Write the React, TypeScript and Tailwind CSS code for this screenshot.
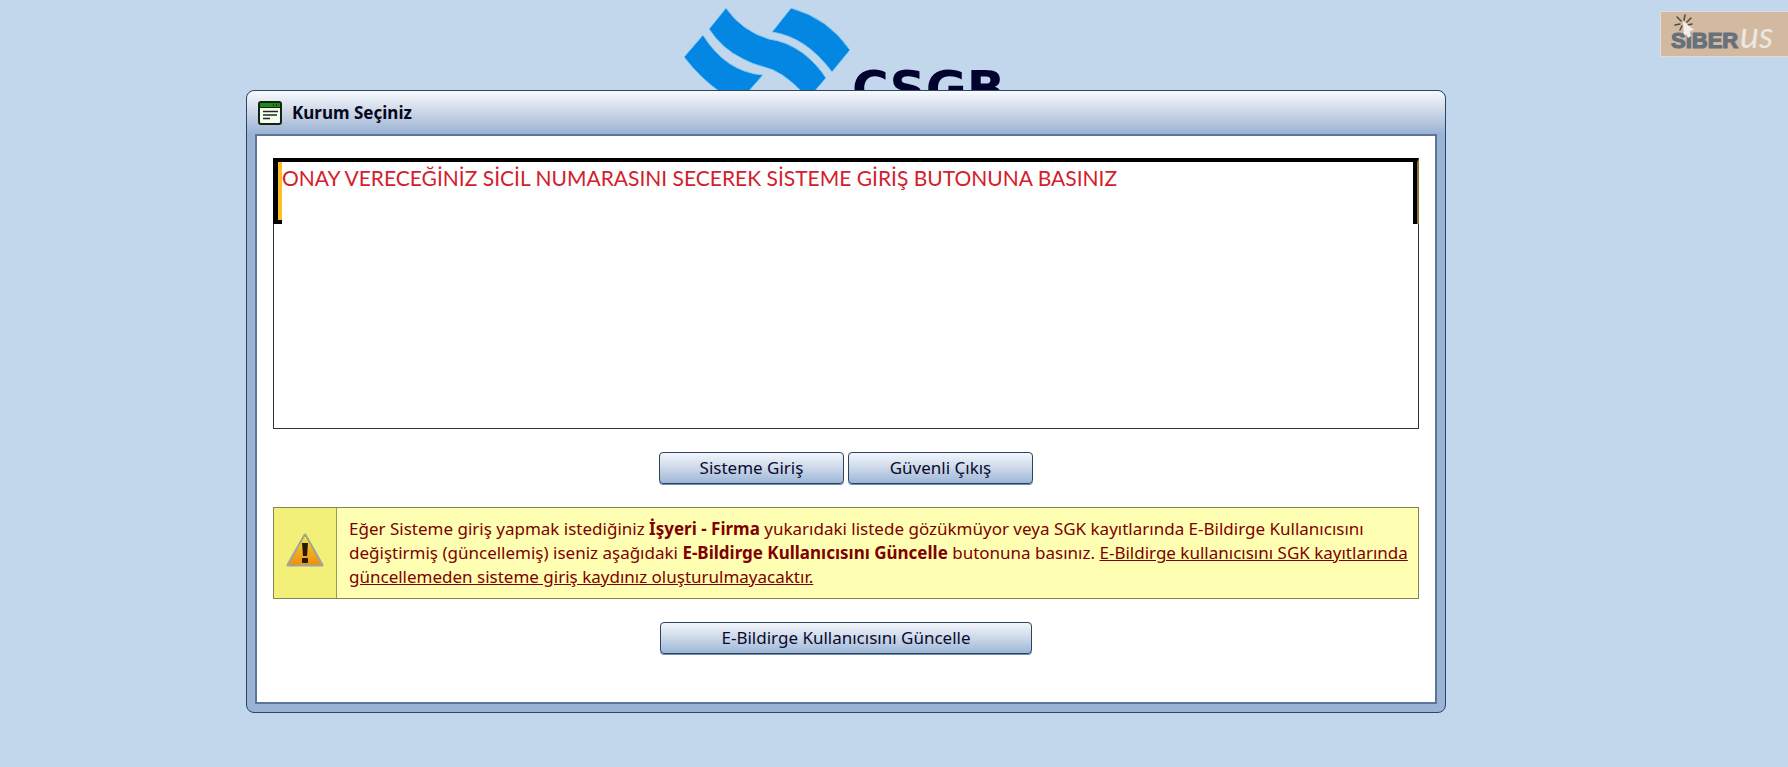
import React from "react";

const CsgbLogo = () => (
  <svg viewBox="0 0 372 90" className="block h-[90px] w-[372px]" role="img" aria-label="CSGB">
    <g fill="#0487e2" stroke="#86cdf6" strokeWidth="1">
      <path d="M66 8 L49 29 Q62 49 83 59 Q92 64 104 67 Q122 71 142 92 L154 92 L166 78 Q158 65 143 53 Q126 41 109 39 Q82 31 66 8 Z" />
      <path d="M43 35 L24 57 Q40 78 60 92 L88 92 L103 75 Q66 72 43 35 Z" />
      <path d="M131 8 L112 32 Q146 37 172 72 L190 50 Q168 18 131 8 Z" />
    </g>
    <text
      x="192"
      y="106"
      fontSize="50"
      fontWeight="700"
      fill="#02022e"
      fontFamily="DejaVu Sans, sans-serif"
    >
      CSGB
    </text>
  </svg>
);

const SiberusLogo = () => (
  <svg viewBox="0 0 128 46" className="block h-[46px] w-32" role="img" aria-label="SIBERus">
    <rect x="0.5" y="0.5" width="130" height="45" fill="#d3b99f" stroke="#dfdcda" />
    <text
      x="11"
      y="37"
      fontSize="22"
      fontWeight="700"
      fill="#66717b"
      stroke="#66717b"
      strokeWidth="1.2"
      fontFamily="Liberation Sans, Arial, sans-serif"
    >
      SIBER
    </text>
    <g stroke="#4d4a48" strokeWidth="1.5" strokeLinecap="round">
      <path d="M17 6 L21 10 M25 4 L24 9 M31 7 L27 11 M15 14 L20 13 M20 19 L22 15 M28 14 L32 13" />
    </g>
    <path d="M23 10 L34 19 L30 20 L31 25 L28 27 L26 23 L24 24 Z" fill="#f1efec" />
    <text
      x="80"
      y="37"
      fontSize="36"
      fontStyle="italic"
      fontWeight="400"
      fill="#ebe8e4"
      fontFamily="Lato, sans-serif"
    >
      us
    </text>
  </svg>
);

const FormIcon = () => (
  <svg viewBox="0 0 24 24" className="h-6 w-6" aria-hidden="true">
    <rect x="1" y="1" width="22" height="22" rx="2" fill="#f6fff2" stroke="#10240f" strokeWidth="2" />
    <rect x="2" y="2" width="20" height="4" fill="#1c8a1c" />
    <path d="M15 4h1M18 4h1" stroke="#0b3d0b" strokeWidth="2" />
    <path d="M1 6.5h22" stroke="#10240f" />
    <path d="M5 10.5h15M5 14h14M5 17.5h7" stroke="#1d2b1c" strokeWidth="1.5" />
  </svg>
);

const WarningIcon = () => (
  <svg viewBox="0 0 38 36" className="h-9 w-[38px]" aria-hidden="true">
    <defs>
      <linearGradient id="warn" x1="0" y1="0" x2="0" y2="1">
        <stop offset="0" stopColor="#f4ee2c" />
        <stop offset="0.5" stopColor="#f0b020" />
        <stop offset="1" stopColor="#f0920c" />
      </linearGradient>
    </defs>
    <path d="M19 3 L36 33 L2 33 Z" fill="#a5a394" stroke="#a5a394" strokeWidth="3" strokeLinejoin="round" />
    <path d="M19 5 L34 32 L4 32 Z" fill="url(#warn)" stroke="url(#warn)" strokeWidth="1" strokeLinejoin="round" />
    <path d="M16 11 H22 L21 24 H17 Z" fill="#241a04" />
    <rect x="16" y="26" width="6" height="5" rx="1" fill="#241a04" />
  </svg>
);

interface ActionButtonProps {
  children: React.ReactNode;
  wide?: boolean;
}

const ActionButton: React.FC<ActionButtonProps> = ({ children, wide }) => (
  <button
    type="button"
    className={`${
      wide ? "w-[372px]" : "w-[185px]"
    } h-8 rounded border border-[#2b4560] bg-linear-to-b from-[#f3f6fc] via-[#ccd8e9] to-[#9db7d7] text-[17px] leading-7 text-[#0a0a2c] shadow-[0_1px_0_#6f8cab]`}
  >
    {children}
  </button>
);

export default function App() {
  return (
    <div className="relative min-h-screen bg-[#c3d7ec] pr-24 font-['Noto_Sans',sans-serif]">
      <div className="absolute top-[11px] right-0">
        <SiberusLogo />
      </div>

      <header className="flex justify-center overflow-hidden">
        <CsgbLogo />
      </header>

      <main className="mx-auto max-w-[1200px] rounded-lg border border-[#2b4565] bg-[#9bb3d3] px-2 pb-2">
        <div className="-mx-2 flex h-[43px] items-center gap-2.5 rounded-t-lg bg-linear-to-b from-[#f8fafd] via-[#cbd6e7] to-[#9bb3d3] px-[11px]">
          <FormIcon />
          <h1 className="text-[17px] font-bold text-[#07071c]">Kurum Seçiniz</h1>
        </div>

        <section className="border-2 border-[#5c7699] bg-white px-4 pt-[22px] pb-12">
          <div className="relative">
            <select
              size={10}
              aria-label="Kurum Seçiniz"
              className="block h-[271px] w-full appearance-none border border-[#2f3436] bg-white"
            />
            {/* selected row with the instruction laid over it */}
            <div className="pointer-events-none absolute inset-x-0 top-0 flex h-[66px] border-t-4 border-r-2 border-black border-r-[#8d7630]">
              <div className="w-[9px] border-b-4 border-l-[5px] border-black bg-[#fbbf24]" />
              <p className="flex-1 border-r-4 border-black font-[Lato,sans-serif] text-[21px] leading-8 text-[#d3202c]">
                ONAY VERECEĞİNİZ SİCİL NUMARASINI SECEREK SİSTEME GİRİŞ BUTONUNA BASINIZ
              </p>
            </div>
          </div>

          <div className="mt-[23px] flex justify-center gap-1">
            <ActionButton>Sisteme Giriş</ActionButton>
            <ActionButton>Güvenli Çıkış</ActionButton>
          </div>

          <div className="mt-[23px] flex border border-[#85854f] bg-[#ffffb3]">
            <div className="flex w-[63px] shrink-0 items-center justify-center border-r border-[#9a9a5a] bg-[#f2f078] pb-1.5">
              <WarningIcon />
            </div>
            <p className="py-[9px] pr-1 pl-3 text-[17px] leading-6 text-[#7f0000]">
              Eğer Sisteme giriş yapmak istediğiniz <b>İşyeri - Firma</b> yukarıdaki listede
              gözükmüyor veya SGK kayıtlarında E-Bildirge Kullanıcısını
              <br />
              değiştirmiş (güncellemiş) iseniz aşağıdaki <b>E-Bildirge Kullanıcısını Güncelle</b>{" "}
              butonuna basınız. <u>E-Bildirge kullanıcısını SGK kayıtlarında</u>
              <br />
              <u>güncellemeden sisteme giriş kaydınız oluşturulmayacaktır.</u>
            </p>
          </div>

          <div className="mt-[23px] flex justify-center">
            <ActionButton wide>E-Bildirge Kullanıcısını Güncelle</ActionButton>
          </div>
        </section>
      </main>
    </div>
  );
}
